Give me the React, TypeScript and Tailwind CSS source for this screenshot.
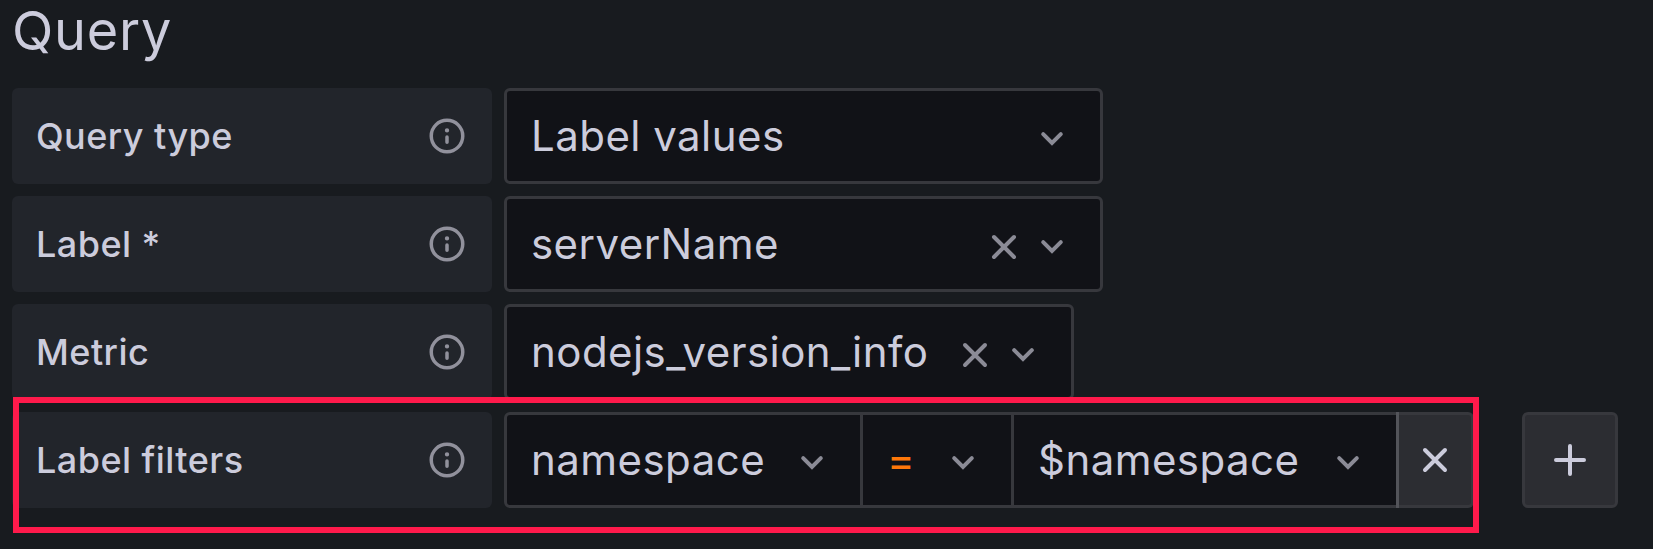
import type { ReactNode } from 'react';

function InfoIcon() {
  return (
    <svg viewBox="0 0 24 24" className="h-[42px] w-[42px] fill-[#91919c]">
      <path d="M12,2A10,10,0,1,0,22,12,10.01114,10.01114,0,0,0,12,2Zm0,18a8,8,0,1,1,8-8A8.00917,8.00917,0,0,1,12,20Zm0-8.5a1,1,0,0,0-1,1v3a1,1,0,0,0,2,0v-3A1,1,0,0,0,12,11.5Zm0-4a1.25,1.25,0,1,0,1.25,1.25A1.25,1.25,0,0,0,12,7.5Z" />
    </svg>
  );
}

function AngleDown() {
  return (
    <svg viewBox="0 0 24 24" className="mt-[6px] h-12 w-12 shrink-0 fill-none stroke-[#8b8b96]">
      <path d="M7.6 9.6 12 14l4.4-4.4" strokeWidth="2" strokeLinecap="round" />
    </svg>
  );
}

function Times({ className }: { className: string }) {
  return (
    <svg viewBox="0 0 24 24" className={`h-12 w-12 shrink-0 fill-none ${className}`}>
      <path d="M7 7l10 10M17 7L7 17" strokeWidth="2" strokeLinecap="round" />
    </svg>
  );
}

function Plus() {
  return (
    <svg viewBox="0 0 24 24" className="h-12 w-12 fill-[#ccccdc]">
      <path d="M19,11H13V5a1,1,0,0,0-2,0v6H5a1,1,0,0,0,0,2h6v6a1,1,0,0,0,2,0V13h6a1,1,0,0,0,0-2Z" />
    </svg>
  );
}

function Label({ children }: { children: ReactNode }) {
  return (
    <div className="mr-3 flex h-24 w-[480px] shrink-0 items-center justify-between rounded-[6px] bg-[#22252b] pr-6 pl-6 text-[36px] font-medium tracking-[0.0125em]">
      <span>{children}</span>
      <InfoIcon />
    </div>
  );
}

function Select({ value, className, clearable }: { value: string; className: string; clearable?: boolean }) {
  return (
    <div className={`flex h-24 shrink-0 items-center border-[3px] border-[#37383d] bg-[#111217] pr-6 pl-6 text-[42px] tracking-[0.0107em] ${className}`}>
      <span className="w-0 flex-1 pb-px whitespace-nowrap">{value}</span>
      {clearable && <Times className="mt-[6px] stroke-[#8b8b96]" />}
      <AngleDown />
    </div>
  );
}

export default function App() {
  return (
    <main className="relative h-[549px] w-[1653px] overflow-hidden bg-[#181b1f] pl-3 font-[Inter,sans-serif] text-[#ccccdc]">
      <h3 className="h-[88px] text-[54px] leading-[61px] font-normal tracking-[0.0139em]">Query</h3>
      <div className="flex flex-col gap-3">
        <div className="flex">
          <Label>Query type</Label>
          <Select value="Label values" className="w-[599px] rounded-[6px]" />
        </div>
        <div className="flex">
          <Label>Label *</Label>
          <Select value="serverName" clearable className="w-[599px] rounded-[6px]" />
        </div>
        <div className="flex">
          <Label>Metric</Label>
          <Select value="nodejs_version_info" clearable className="w-[570px] rounded-[6px]" />
        </div>
        <div className="flex">
          <Label>Label filters</Label>
          <Select value="namespace" className="w-[359px] rounded-l-[6px]" />
          <Select value="=" className="-ml-[3px] w-[154px] text-[#ff780a]" />
          <Select value="$namespace" className="-ml-[3px] w-[388px]" />
          <div className="-ml-[3px] flex h-24 w-[3px] shrink-0 bg-[#53545a]" />
          <button className="flex h-24 w-[75px] shrink-0 items-center justify-center rounded-r-[6px] border-y-[3px] border-r-[3px] border-[#37383d] bg-[#2c2d32]">
            <Times className="stroke-[#ccccdc]" />
          </button>
          <button className="ml-12 flex h-24 w-24 shrink-0 items-center justify-center rounded-[6px] border-[3px] border-[#37383d] bg-[#2c2d32]">
            <Plus />
          </button>
        </div>
      </div>
      <div className="absolute top-[397px] left-[13px] h-[136px] w-[1466px] border-[6px] border-[#ff1a4b]" />
    </main>
  );
}
